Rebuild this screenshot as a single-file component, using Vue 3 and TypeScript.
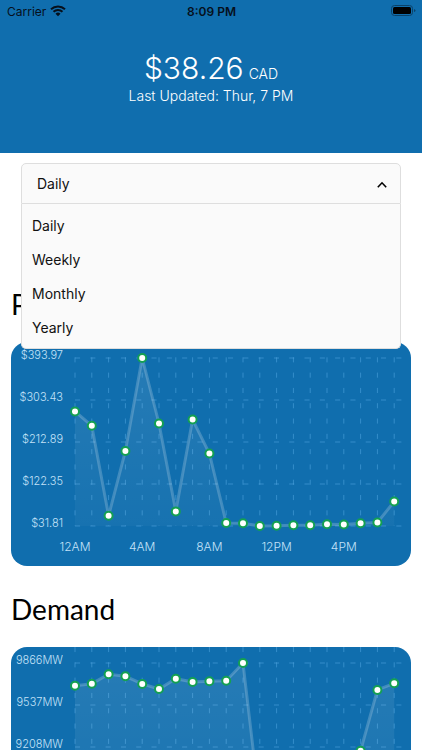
<script setup lang="ts">
import { computed, ref } from 'vue'

interface Chart {
  id: string
  title: string
  values: number[]
  format: (value: number) => string
}

const periods = ['Daily', 'Weekly', 'Monthly', 'Yearly']
const period = ref('Daily')
const open = ref(true)

function choose(option: string) {
  period.value = option
  open.value = false
}

const hours = ['12AM', '4AM', '8AM', '12PM', '4PM']

const charts: Chart[] = [
  {
    id: 'price',
    title: 'Price',
    values: [
      278.7, 247.8, 53.8, 193.5, 393.97, 252.8, 63.3, 261.4, 188.1, 38.3,
      37.8, 31.81, 32.2, 33.5, 33.5, 35.7, 35, 37.6, 39.4, 84.6,
    ],
    format: (value) => '$' + value.toFixed(2),
  },
  {
    id: 'demand',
    title: 'Demand',
    values: [
      9688, 9704, 9778, 9762, 9702, 9662, 9743, 9717, 9723, 9727,
      9866, 8746, 8620, 8580, 8550, 8600, 8760, 9179, 9655, 9707,
    ],
    format: (value) => value.toFixed(0) + 'MW',
  },
]

const plot = { width: 400, height: 224, left: 64, right: 391, top: 16, rows: 4, rowHeight: 42 }
const bottom = plot.top + plot.rows * plot.rowHeight

const drawn = computed(() =>
  charts.map((chart) => {
    const max = Math.max(...chart.values)
    const min = Math.min(...chart.values)
    const step = (plot.width - plot.left) / chart.values.length
    const points = chart.values.map((value, i) => ({
      x: plot.left + i * step,
      y: plot.top + ((max - value) / (max - min)) * (bottom - plot.top),
    }))
    const line = points.map((p) => `${p.x},${p.y}`).join(' ')
    const last = points[points.length - 1]
    const rows = Array.from({ length: plot.rows + 1 }, (_, i) => ({
      y: plot.top + i * plot.rowHeight,
      label: chart.format(max - ((max - min) * i) / plot.rows),
    }))
    const ticks = hours.map((label, i) => ({ label, x: plot.left + i * 4 * step }))
    return {
      ...chart,
      points,
      line,
      rows,
      ticks,
      area: `${plot.left},${bottom} ${line} ${last.x},${bottom}`,
    }
  }),
)
</script>

<template>
  <div class="screen">
    <header class="hero">
      <div class="status">
        <span class="carrier">
          Carrier
          <svg class="wifi" viewBox="0 0 16 12" aria-hidden="true">
            <path d="M1 4.2 A10.2 10.2 0 0 1 15 4.2" />
            <path d="M3.5 6.8 A6.6 6.6 0 0 1 12.5 6.8" />
            <path class="solid" d="M8 11.3 L5.5 8.8 A3.6 3.6 0 0 1 10.5 8.8 Z" />
          </svg>
        </span>
        <time class="clock">8:09 PM</time>
        <span class="power">
          <svg class="battery" viewBox="0 0 25 12" aria-hidden="true">
            <rect class="shell" x="0.5" y="0.5" width="21" height="10" rx="3" />
            <rect x="2" y="2" width="18" height="7" rx="1.5" />
            <path class="cap" d="M23 4 Q24.5 4.5 24.5 5.5 Q24.5 6.5 23 7 Z" />
          </svg>
        </span>
      </div>
      <p class="price"><span class="amount">$38.26</span> <span class="currency">CAD</span></p>
      <p class="updated">Last Updated: Thur, 7 PM</p>
    </header>

    <main class="content">
      <div class="picker">
        <button
          class="toggle"
          :class="{ open }"
          type="button"
          aria-label="Period"
          aria-haspopup="listbox"
          aria-controls="period-list"
          :aria-expanded="open"
          @click="open = !open"
        >
          {{ period }}
          <svg class="chevron" viewBox="0 0 12 8" aria-hidden="true">
            <path d="M1.8 7.2 L6 2.8 L10.2 7.2" />
          </svg>
        </button>
        <div v-if="open" id="period-list" class="menu" role="listbox" aria-label="Period">
          <button
            v-for="option in periods"
            :key="option"
            class="option"
            type="button"
            role="option"
            :aria-selected="option === period"
            @click="choose(option)"
          >
            {{ option }}
          </button>
        </div>
      </div>

      <section v-for="chart in drawn" :key="chart.id" class="panel">
        <h2 class="title">{{ chart.title }}</h2>
        <svg
          class="chart"
          :viewBox="`0 0 ${plot.width} ${plot.height}`"
          role="img"
          :aria-label="chart.title"
        >
          <defs>
            <linearGradient :id="`fade-${chart.id}`" x1="0" y1="0" x2="0" :y2="bottom" gradientUnits="userSpaceOnUse">
              <stop offset="0" stop-color="#fff" stop-opacity="0.1" />
              <stop offset="1" stop-color="#fff" stop-opacity="0.03" />
            </linearGradient>
          </defs>
          <g class="grid">
            <line
              v-for="row in chart.rows"
              :key="row.y"
              :x1="plot.left"
              :x2="plot.right"
              :y1="row.y"
              :y2="row.y"
            />
            <line
              v-for="point in chart.points"
              :key="point.x"
              :x1="point.x"
              :x2="point.x"
              y1="0"
              :y2="bottom"
            />
          </g>
          <polygon :points="chart.area" :fill="`url(#fade-${chart.id})`" />
          <polyline class="line" :points="chart.line" />
          <circle
            v-for="point in chart.points"
            :key="point.x"
            class="dot"
            :cx="point.x"
            :cy="point.y"
            r="4"
          />
          <text v-for="row in chart.rows" :key="row.label" class="value" x="52" :y="row.y + 1">
            {{ row.label }}
          </text>
          <text v-for="tick in chart.ticks" :key="tick.label" class="hour" :x="tick.x" y="209">
            {{ tick.label }}
          </text>
        </svg>
      </section>
    </main>
  </div>
</template>

<style>
html {
  scrollbar-width: none;
}
body {
  margin: 0;
  background: #fff;
}
</style>

<style scoped>
.screen {
  font-family: Inter, "Liberation Sans", sans-serif;
  color: #111;
}
.hero {
  box-sizing: border-box;
  padding-bottom: 48px;
  background: #106eae;
  color: #fff;
  text-align: center;
}
.status {
  display: grid;
  grid-template-columns: 1fr auto 1fr;
  align-items: center;
  height: 22px;
  padding: 0 6px 0 7px;
  font-size: 12px;
  color: #06101c;
}
.carrier {
  display: flex;
  align-items: center;
  gap: 4px;
}
.wifi {
  width: 16px;
  height: 12px;
  fill: none;
  stroke: #06101c;
  stroke-width: 2;
}
.wifi .solid {
  fill: #06101c;
  stroke: none;
}
.clock {
  font-weight: 600;
}
.power {
  display: flex;
  justify-content: flex-end;
}
.battery {
  width: 25px;
  height: 12px;
  fill: #000;
}
.battery .shell {
  fill: none;
  stroke: #0a4269;
}
.battery .cap {
  fill: #0a4269;
}
.price {
  display: flex;
  align-items: baseline;
  justify-content: center;
  gap: 5px;
  height: 38px;
  margin: 27px 0 0;
}
.amount {
  font-size: 30px;
  font-weight: 300;
  line-height: 38px;
}
.currency {
  font-size: 14px;
  font-weight: 300;
  line-height: 18px;
}
.updated {
  margin: 0;
  font-size: 14px;
  font-weight: 300;
  line-height: 18px;
}
.content {
  padding: 10px 11px 16px;
}
.picker {
  position: relative;
  margin: 0 10px 82px;
}
.toggle {
  box-sizing: border-box;
  display: flex;
  align-items: center;
  justify-content: space-between;
  width: 100%;
  height: 41px;
  padding: 0 12px 0 15px;
  border: 1px solid #dedede;
  border-radius: 5px;
  background: #fafafa;
  color: #111;
  font: inherit;
  font-size: 14px;
  text-align: left;
}
.toggle.open {
  border-radius: 5px 5px 0 0;
}
.chevron {
  width: 12px;
  height: 8px;
  fill: none;
  stroke: #000;
  stroke-width: 1.6;
}
.menu {
  box-sizing: border-box;
  position: absolute;
  z-index: 1;
  top: 100%;
  left: 0;
  right: 0;
  display: flex;
  flex-direction: column;
  padding: 4px 0;
  border: 1px solid #dedede;
  border-top: 0;
  border-radius: 0 0 5px 5px;
  background: #fafafa;
}
.option {
  height: 34px;
  padding: 0 10px;
  border: 0;
  background: transparent;
  color: #111;
  font: inherit;
  font-size: 14px;
  text-align: left;
}
.panel {
  margin-bottom: 25px;
}
.title {
  margin: 0 0 20px;
  font-family: Lato, sans-serif;
  font-size: 28px;
  font-weight: 400;
  line-height: 36px;
  color: #000;
}
.chart {
  display: block;
  width: 100%;
  height: auto;
  border-radius: 16px;
  background: #106eae;
}
.grid line {
  stroke: #5aaee8;
  stroke-opacity: 0.5;
  stroke-dasharray: 5.1 10.2;
}
.line {
  fill: none;
  stroke: #fff;
  stroke-opacity: 0.2;
  stroke-width: 3;
}
.dot {
  fill: #fff;
  stroke: #14a052;
  stroke-width: 2;
}
.value {
  fill: #c4e2f8;
  font-size: 11px;
  font-weight: 300;
  text-anchor: end;
}
.hour {
  fill: #c4e2f8;
  font-size: 12px;
  font-weight: 300;
  text-anchor: middle;
}
</style>
